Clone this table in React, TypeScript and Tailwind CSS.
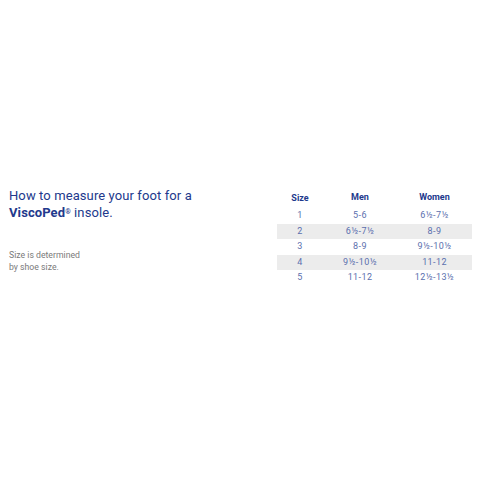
import * as React from "react";

const rows = [
  { size: "1", men: "5-6", women: "6½-7½" },
  { size: "2", men: "6½-7½", women: "8-9" },
  { size: "3", men: "8-9", women: "9½-10½" },
  { size: "4", men: "9½-10½", women: "11-12" },
  { size: "5", men: "11-12", women: "12½-13½" },
];

export default function App() {
  return (
    <div className="h-[480px] w-[480px] bg-white font-['Roboto',sans-serif]">
      <div className="flex pt-[187px]">
        {/* ── Intro copy ── */}
        <div className="w-[277px] pl-[9px]">
          <h2 className="text-[13px] leading-[17px] tracking-[0.1px] text-[#22398c]">
            How to measure your foot for a
            <br />
            <span className="font-bold">ViscoPed</span>
            <sup className="text-[7px] font-bold">®</sup> insole.
          </h2>
          <p className="mt-[28px] text-[8.7px] leading-[12px] text-[#7a7a7a]">
            Size is determined
            <br />
            by shoe size.
          </p>
        </div>

        {/* ── Size chart ── */}
        <div className="w-[195px]">
          <div className="grid h-[20px] grid-cols-[46px_74px_75px] items-center text-[9px] font-bold text-[#22398c]">
            <span className="pt-[3px] text-center">Size</span>
            <span className="pt-[1px] text-center">Men</span>
            <span className="pt-[1px] text-center">Women</span>
          </div>
          <div className="mt-[1px]">
            {rows.map((r, i) => (
              <div
                key={r.size}
                className={
                  "grid h-[15.5px] grid-cols-[46px_74px_75px] items-center text-[9px] tracking-[0.4px] text-[#5b6fae] " +
                  (i % 2 === 1 ? "bg-[#ececec]" : "")
                }
              >
                <span className="text-center">{r.size}</span>
                <span className="text-center">{r.men}</span>
                <span className="text-center">{r.women}</span>
              </div>
            ))}
          </div>
        </div>
      </div>
    </div>
  );
}
